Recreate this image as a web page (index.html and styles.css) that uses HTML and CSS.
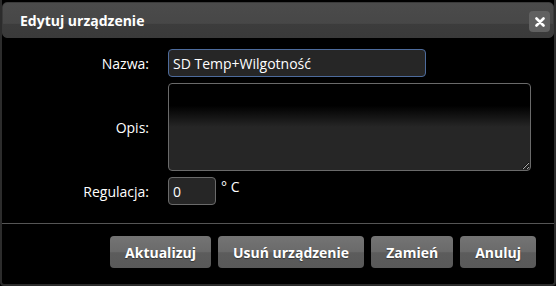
FILE: index.html
```html
<!DOCTYPE html>
<html>
	<head>
		<meta charset="utf-8">
		<title>Edytuj urządzenie</title>
		<link rel="stylesheet" href="styles.css">
	</head>
	<body>
		<div class="dialog">
			<div class="titlebar">
				<span class="title">Edytuj urządzenie</span>
				<button class="close" title="Zamknij">
					<svg width="10" height="10" viewBox="0 0 10 10">
						<path d="M1.5 1.5 L8.5 8.5 M8.5 1.5 L1.5 8.5" stroke="#fff" stroke-width="2.6" stroke-linecap="round"/>
					</svg>
				</button>
			</div>
			<div class="form">
				<label class="label" for="name">Nazwa:</label>
				<input id="name" class="input name" type="text" value="SD Temp+Wilgotność">
				<label class="label" for="desc">Opis:</label>
				<textarea id="desc" class="input desc"></textarea>
				<label class="label" for="reg">Regulacja:</label>
				<div class="reg-row">
					<input id="reg" class="input reg" type="text" value="0">
					<span class="unit">° C</span>
				</div>
			</div>
			<div class="buttons">
				<button class="btn">Aktualizuj</button>
				<button class="btn">Usuń urządzenie</button>
				<button class="btn">Zamień</button>
				<button class="btn">Anuluj</button>
			</div>
		</div>
	</body>
</html>
```

FILE: styles.css
```css
* {
	box-sizing: border-box;
	font-family: 'Open Sans', 'Noto Sans', sans-serif;
}

body {
	margin: 0;
	background: #000;
}

.dialog {
	width: 556px;
	height: 286px;
	padding: 2px 2px 0;
	background: #000;
	border: 2px solid #2c2c2c;
	border-top: none;
	border-radius: 0 0 4px 4px;
}

.titlebar {
	display: flex;
	align-items: center;
	justify-content: space-between;
	height: 36px;
	margin: 0 -2px 0 -2px;
	padding: 0 3px 0 17px;
	border: 1px solid #3a3a3a;
	border-radius: 5px;
	background: linear-gradient(#4b4b4b, #474747 60%, #3c3c3c 62%, #3a3a3a);
}

.title {
	color: #fff;
	font-size: 14px;
	font-weight: bold;
	padding-top: 1px;
}

.close {
	display: flex;
	align-items: center;
	justify-content: center;
	width: 21px;
	height: 21px;
	padding: 0;
	border: none;
	border-radius: 4px;
	background: #616161;
	margin-top: 3px;
}

.form {
	display: grid;
	grid-template-columns: 145px 1fr;
	column-gap: 19px;
	row-gap: 6px;
	align-items: center;
	padding: 11px 22px 0 0;
}

.label {
	justify-self: end;
	color: #fff;
	font-size: 14px;
}

.input {
	display: block;
	color: #fff;
	font-size: 14px;
	background: #262626;
	border: 1px solid #6a6a6a;
	border-radius: 4px;
	outline: none;
}

.name {
	width: 258px;
	height: 28px;
	padding: 0 4px;
	border-color: #4d6b9c;
}

.desc {
	width: 363px;
	height: 88px;
	resize: both;
	background: linear-gradient(#000, #000 25%, #262626 50%, #262626);
}

.reg-row {
	display: flex;
	align-items: flex-start;
	gap: 5px;
}

.reg {
	width: 48px;
	height: 28px;
	padding: 0 4px;
}

.unit {
	color: #fff;
	font-size: 14px;
	line-height: 20px;
}

.buttons {
	display: flex;
	justify-content: flex-end;
	gap: 7px;
	margin: 18px -2px 0;
	padding: 12px 18px 0 0;
	border-top: 1px solid #555;
}

.btn {
	height: 32px;
	padding: 0 15px;
	color: #fff;
	font-size: 14px;
	font-weight: bold;
	text-shadow: 0 1px 1px #333;
	border: none;
	border-radius: 4px;
	background: linear-gradient(#747474, #6a6a6a 50%, #5c5c5c 52%, #595959);
}
```
